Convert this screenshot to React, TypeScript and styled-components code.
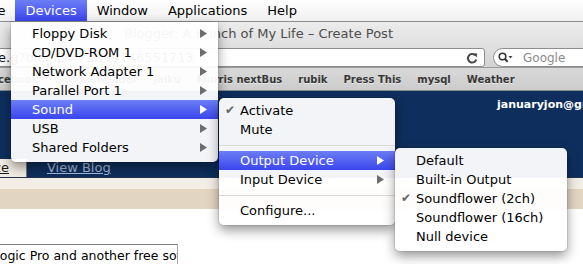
import React from "react";
import styled, { createGlobalStyle, css } from "styled-components";

const GlobalStyle = createGlobalStyle`
  html, body { margin: 0; padding: 0; background: #ffffff; }
  body { font-family: "DejaVu Sans", "Noto Sans", sans-serif; overflow: hidden; }
`;

const Screen = styled.div`
  position: relative;
  width: 583px;
  height: 264px;
  overflow: hidden;
  display: flex;
  flex-direction: column;
  font-family: "DejaVu Sans", "Noto Sans", sans-serif;
  white-space: nowrap;
`;

/* ---------- system menu bar ---------- */
const MenuBar = styled.div`
  flex: none;
  height: 21px;
  display: flex;
  background: linear-gradient(#ffffff, #f0f0f0);
  border-bottom: 1px solid #8f8f8f;
  font-size: 13px;
  color: #000;
`;

const MenuTitle = styled.div<{ $active?: boolean }>`
  padding: 0 10px;
  line-height: 21px;
  ${(p) =>
    p.$active &&
    css`
      background: linear-gradient(#6c7ef6, #3a45ee);
      color: #fff;
    `}
`;

const ClippedMenuTitle = styled(MenuTitle)`
  margin-left: -59px;
`;

/* ---------- browser window ---------- */
const TitleBar = styled.div`
  flex: none;
  height: 22px;
  display: flex;
  align-items: center;
  padding-left: 124px;
  background: linear-gradient(#ececec, #e1e1e1);
  font-size: 13px;
  color: #4c4c4c;
`;

const Toolbar = styled.div`
  flex: none;
  height: 24px;
  box-sizing: border-box;
  padding-top: 4px;
  display: flex;
  align-items: flex-start;
  background: linear-gradient(#e1e1e1, #d3d3d3);
  border-bottom: 1px solid #9b9b9b;
`;

const UrlField = styled.div`
  flex: none;
  width: 505px;
  height: 19px;
  margin-left: -20px;
  box-sizing: border-box;
  border: 1px solid #8d8d8d;
  border-radius: 3px;
  background: #fff;
  display: flex;
  align-items: center;
  justify-content: space-between;
  padding: 0 6px 0 17px;
  font-size: 13px;
  color: #111;
  overflow: hidden;
`;

const UrlText = styled.span`
  overflow: hidden;
`;

const SearchField = styled.div`
  flex: none;
  width: 130px;
  height: 19px;
  margin-left: 8px;
  box-sizing: border-box;
  border: 1px solid #8d8d8d;
  border-radius: 10px;
  background: #fff;
  display: flex;
  align-items: center;
  padding-left: 4px;
  gap: 2px;
`;

const SearchPlaceholder = styled.span`
  margin-left: 8px;
  font-size: 12px;
  color: #8a8a8a;
`;

const BookmarksBar = styled.div`
  flex: none;
  height: 22px;
  display: flex;
  align-items: center;
  gap: 16px;
  background: linear-gradient(#d9d9d9, #cccccc);
  border-bottom: 1px solid #8a8a8a;
  overflow: hidden;
`;

const Bookmark = styled.span<{ $lead?: boolean }>`
  font-size: 10px;
  font-weight: bold;
  color: #363636;
  text-shadow: 0 1px 0 rgba(255, 255, 255, 0.55);
  ${(p) => p.$lead && css`margin-left: -15px;`}
`;

const BlogHeader = styled.div`
  flex: none;
  height: 86px;
  display: flex;
  flex-direction: column;
  justify-content: space-between;
  background: #0e2f5d;
  border-bottom: 1px solid #24334a;
`;

const Email = styled.div`
  padding: 7px 0 0 497px;
  font-size: 11px;
  font-weight: bold;
  color: #ffffff;
  line-height: 14px;
`;

const TabRow = styled.div`
  display: flex;
  align-items: flex-end;
  height: 18px;
`;

const Tab = styled.a`
  margin-left: -50px;
  padding: 0 17px 0 0;
  background: #f2ece2;
  border-right: 1px solid #7f7767;
  font-size: 13px;
  line-height: 18px;
  color: #1b1b1b;
  text-decoration: underline;
`;

const ViewBlog = styled.a`
  margin-left: 20px;
  font-size: 13px;
  line-height: 18px;
  color: #a6badb;
  text-decoration: underline;
`;

const Band = styled.div`
  flex: none;
  height: 31px;
  background: linear-gradient(#f3eee5 0, #f3eee5 11px, #e2d6c2 11px, #e2d6c2 100%);
`;

const Content = styled.div`
  flex: 1;
  background: #ffffff;
  padding-top: 35px;
`;

const TextInput = styled.div`
  width: 208px;
  height: 24px;
  margin-left: -30px;
  box-sizing: border-box;
  border: 1px solid #a3a3a3;
  border-top-color: #7c7c7c;
  padding-left: 22px;
  font-size: 12.5px;
  line-height: 21px;
  color: #000;
  overflow: hidden;
`;

/* ---------- pull-down menus ---------- */
const MenuPanel = styled.div<{ $left: number; $top: number; $width: number; $attached?: boolean }>`
  position: absolute;
  left: ${(p) => p.$left}px;
  top: ${(p) => p.$top}px;
  width: ${(p) => p.$width}px;
  padding: ${(p) => (p.$attached ? "2px 0 5px" : "3px 0 5px")};
  background: rgba(255, 255, 255, 0.95);
  border-radius: ${(p) => (p.$attached ? "0 0 5px 5px" : "5px")};
  box-shadow: 0 5px 12px rgba(0, 0, 0, 0.42), 0 0 0 1px rgba(0, 0, 0, 0.08);
  font-size: 13px;
`;

const MenuRow = styled.div<{ $selected?: boolean }>`
  height: 19px;
  display: grid;
  grid-template-columns: 21px 1fr auto;
  align-items: center;
  padding-right: 11px;
  color: #000;
  ${(p) =>
    p.$selected &&
    css`
      background: linear-gradient(#6c7ef6, #3a45ee);
      color: #fff;
    `}
`;

const CheckCell = styled.span`
  padding-left: 6px;
  font-size: 12px;
  color: #666;
  line-height: 19px;
`;

const Separator = styled.div`
  height: 12px;
  display: flex;
  align-items: center;
  &::after {
    content: "";
    flex: 1;
    height: 1px;
    background: #dadada;
  }
`;

const Arrow = ({ light }: { light?: boolean }) => (
  <svg width="7" height="9" viewBox="0 0 7 9">
    <polygon points="0,0 7,4.5 0,9" fill={light ? "#ffffff" : "#6d6d6d"} />
  </svg>
);

const ReloadIcon = () => (
  <svg width="12" height="12" viewBox="0 0 12 12">
    <path d="M9.2 3.4 A4.2 4.2 0 1 0 10.2 7.4" fill="none" stroke="#474747" strokeWidth="2" />
    <polygon points="7.2,1.2 11.2,1.4 10.6,5.4" fill="#474747" />
  </svg>
);

const SearchIcon = () => (
  <svg width="15" height="11" viewBox="0 0 15 11">
    <circle cx="4.5" cy="4.5" r="3.3" fill="none" stroke="#333" strokeWidth="1.6" />
    <line x1="6.9" y1="6.9" x2="9.6" y2="9.8" stroke="#333" strokeWidth="2" />
    <polygon points="10.5,4 14.5,4 12.5,6.5" fill="#444" />
  </svg>
);

type Item = { label: string; checked?: boolean; sub?: boolean; selected?: boolean } | "sep";

const MenuList = ({ items }: { items: Item[] }) => (
  <>
    {items.map((it, i) =>
      it === "sep" ? (
        <Separator key={i} />
      ) : (
        <MenuRow key={i} $selected={it.selected}>
          <CheckCell>{it.checked ? "✔" : ""}</CheckCell>
          <span>{it.label}</span>
          {it.sub ? <Arrow light={it.selected} /> : <span />}
        </MenuRow>
      )
    )}
  </>
);

const devices: Item[] = [
  { label: "Floppy Disk", sub: true },
  { label: "CD/DVD-ROM 1", sub: true },
  { label: "Network Adapter 1", sub: true },
  { label: "Parallel Port 1", sub: true },
  { label: "Sound", sub: true, selected: true },
  { label: "USB", sub: true },
  { label: "Shared Folders", sub: true },
];

const sound: Item[] = [
  { label: "Activate", checked: true },
  { label: "Mute" },
  "sep",
  { label: "Output Device", sub: true, selected: true },
  { label: "Input Device", sub: true },
  "sep",
  { label: "Configure..." },
];

const output: Item[] = [
  { label: "Default" },
  { label: "Built-in Output" },
  { label: "Soundflower (2ch)", checked: true },
  { label: "Soundflower (16ch)" },
  { label: "Null device" },
];

export default function App() {
  return (
    <>
      <GlobalStyle />
      <Screen>
        <MenuBar>
          <ClippedMenuTitle>Machine</ClippedMenuTitle>
          <MenuTitle $active>Devices</MenuTitle>
          <MenuTitle>Window</MenuTitle>
          <MenuTitle>Applications</MenuTitle>
          <MenuTitle>Help</MenuTitle>
        </MenuBar>

        <TitleBar>Blogger: A Bunch of My Life – Create Post</TitleBar>

        <Toolbar>
          <UrlField>
            <UrlText>e.g?blogID=73809146551713</UrlText>
            <ReloadIcon />
          </UrlField>
          <SearchField>
            <SearchIcon />
            <SearchPlaceholder>Google</SearchPlaceholder>
          </SearchField>
        </Toolbar>

        <BookmarksBar>
          <Bookmark $lead>Facebook</Bookmark>
          <Bookmark>Google Reader</Bookmark>
          <Bookmark>Jaiku</Bookmark>
          <Bookmark>Morris nextBus</Bookmark>
          <Bookmark>rubik</Bookmark>
          <Bookmark>Press This</Bookmark>
          <Bookmark>mysql</Bookmark>
          <Bookmark>Weather</Bookmark>
        </BookmarksBar>

        <BlogHeader>
          <Email>januaryjon@gmail.com</Email>
          <TabRow>
            <Tab>Monetize</Tab>
            <ViewBlog>View Blog</ViewBlog>
          </TabRow>
        </BlogHeader>

        <Band />

        <Content>
          <TextInput>Logic Pro and another free software</TextInput>
        </Content>

        <MenuPanel $left={11} $top={22} $width={207} $attached>
          <MenuList items={devices} />
        </MenuPanel>
        <MenuPanel $left={219} $top={98} $width={176}>
          <MenuList items={sound} />
        </MenuPanel>
        <MenuPanel $left={395} $top={148} $width={172}>
          <MenuList items={output} />
        </MenuPanel>
      </Screen>
    </>
  );
}
